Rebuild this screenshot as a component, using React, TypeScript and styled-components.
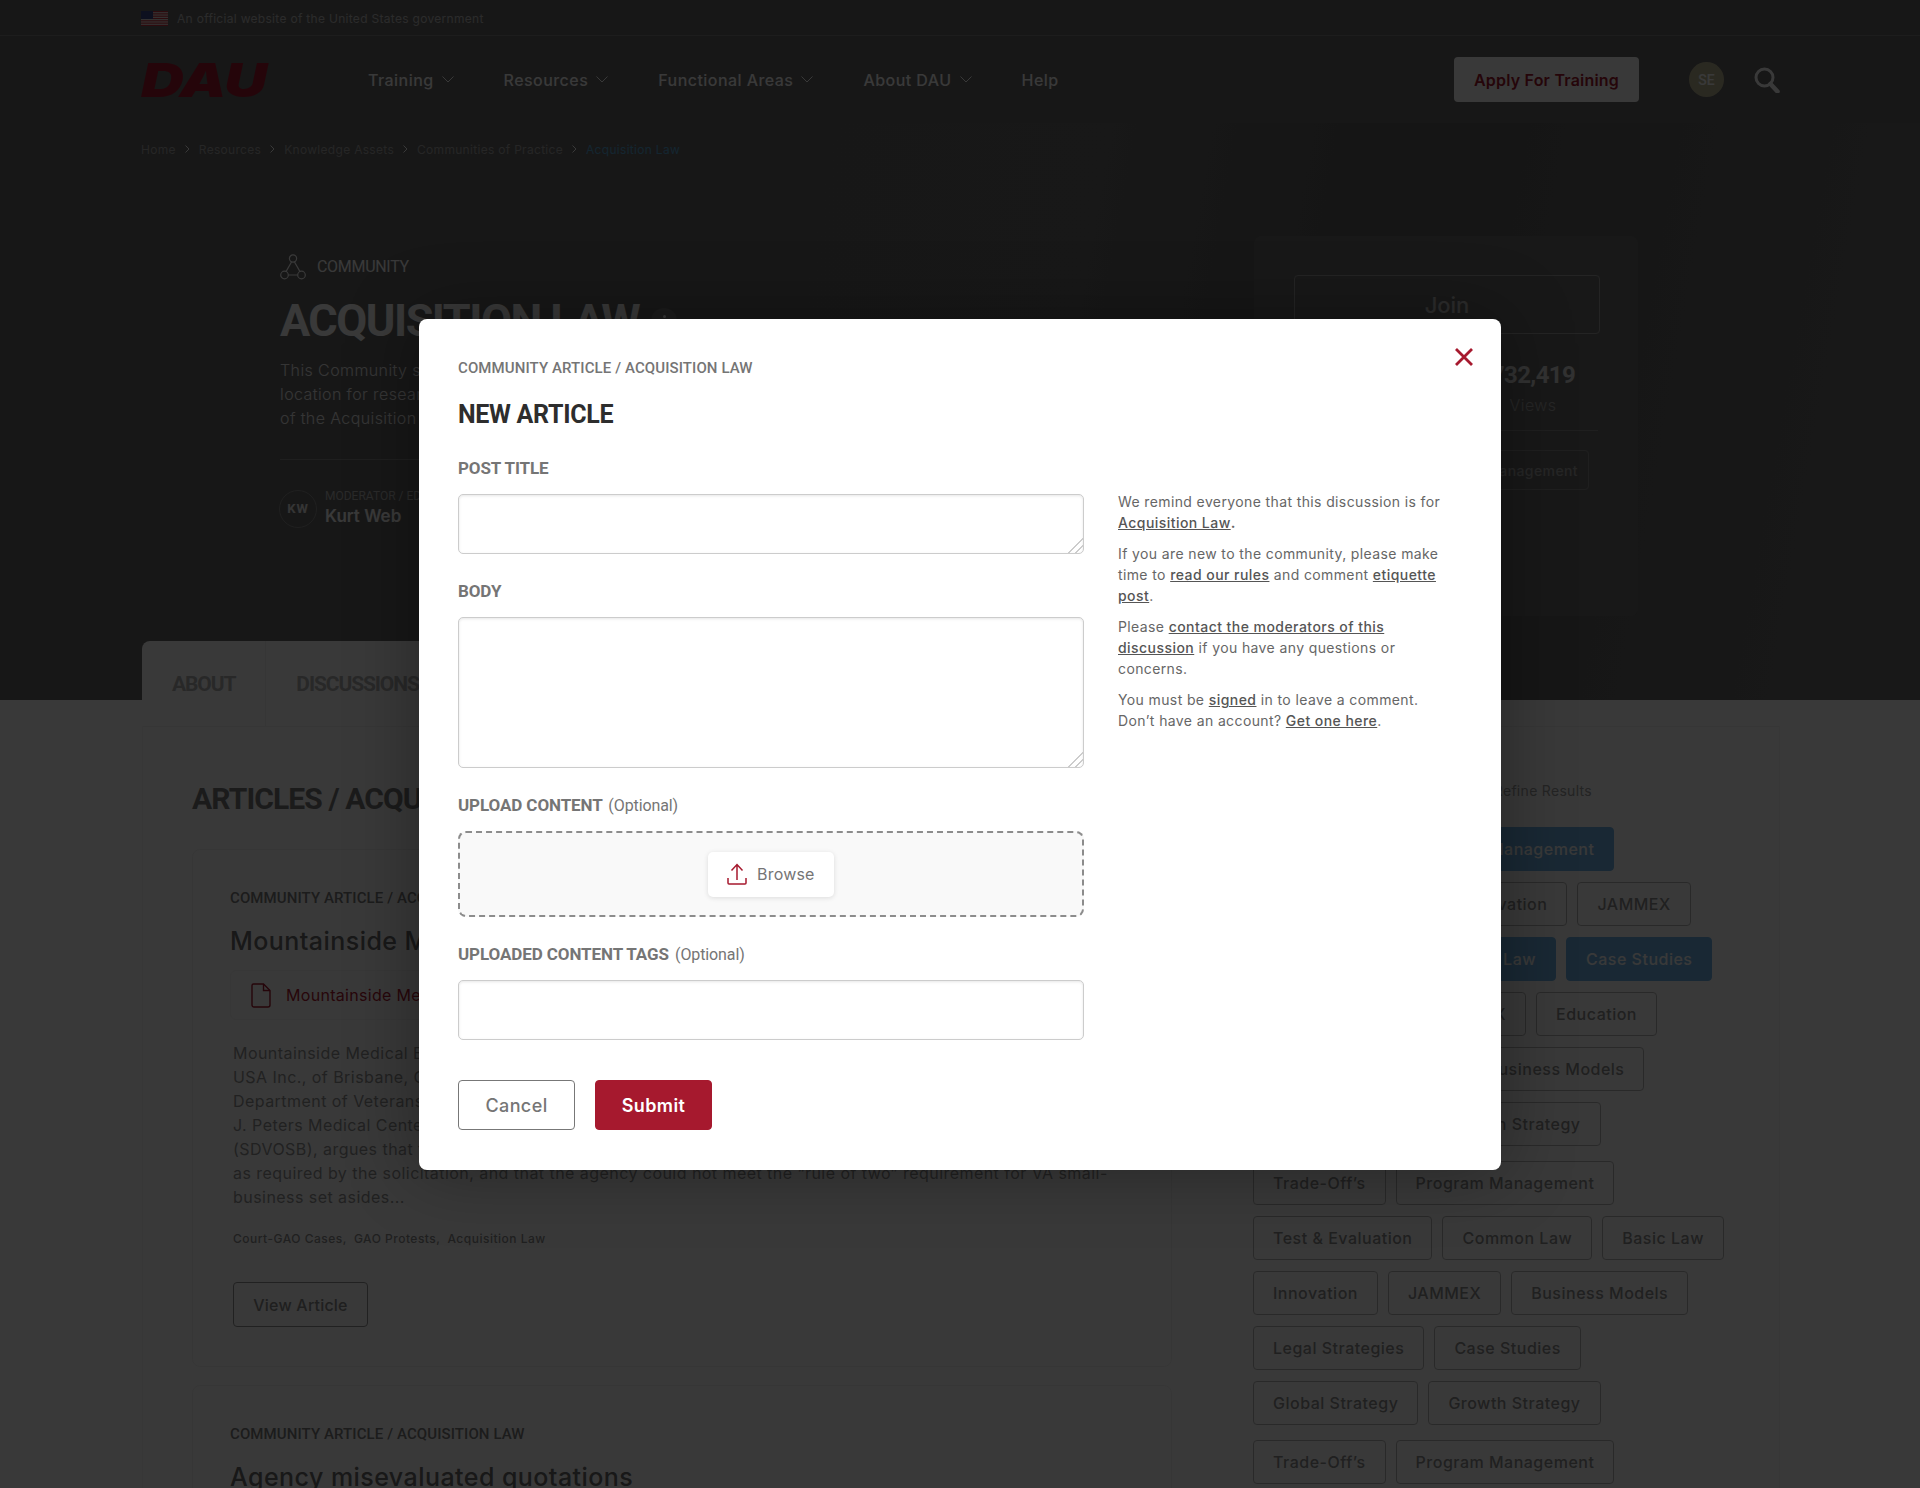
import styled, { createGlobalStyle } from "styled-components";

const SANS = `"Inter", "Noto Sans", sans-serif`;
const HEAD = `"Roboto", "Liberation Sans", sans-serif`;
const CRIMSON = "#a6192e";

const GlobalStyle = createGlobalStyle`
  html, body {
    margin: 0;
    padding: 0;
    background: #fff;
  }
  body {
    height: 1488px;
    overflow: hidden;
    font-family: ${SANS};
  }
  * {
    box-sizing: border-box;
  }
`;

const Chevron = () => (
  <svg width="12" height="7" viewBox="0 0 12 7" fill="none" stroke="#fff" strokeWidth="1">
    <path d="M0.5 0.5 L6 6 L11.5 0.5" />
  </svg>
);

const Crumbs = ["Home", "Resources", "Knowledge Assets", "Communities of Practice"];

const NavItems = [
  { label: "Training", menu: true },
  { label: "Resources", menu: true },
  { label: "Functional Areas", menu: true },
  { label: "About DAU", menu: true },
  { label: "Help", menu: false },
];

const articleLines = [
  "Mountainside Medical Equipment Inc., of Rye Brook, New York, protests the award to Bio-Medical",
  "USA Inc., of Brisbane, California, of a contract issued by the Department of Veterans Affairs for",
  "Department of Veterans Affairs medical supplies at the James",
  "J. Peters Medical Center. The protester, a service-disabled veteran-owned small business",
  "(SDVOSB), argues that the awardee's quotation was not evaluated on the basis of the factors",
  "as required by the solicitation, and that the agency could not meet the “rule of two” requirement for VA small-",
  "business set asides...",
];

const filterRows: { label: string; active?: boolean }[][] = [
  [{ label: "Trade-Off’s", active: true }, { label: "Program Management", active: true }],
  [{ label: "Test & Evaluation" }, { label: "Innovation" }, { label: "JAMMEX" }],
  [{ label: "Legal Strategies", active: true }, { label: "Basic Law", active: true }, { label: "Case Studies", active: true }],
  [{ label: "Common Law" }, { label: "JAMMEX" }, { label: "Education" }],
  [{ label: "Acquisition Strategy" }, { label: "Business Models" }],
  [{ label: "Global Strategy" }, { label: "Growth Strategy" }],
];

const moreRows: { label: string }[][] = [
  [{ label: "Trade-Off’s" }, { label: "Program Management" }],
  [{ label: "Test & Evaluation" }, { label: "Common Law" }, { label: "Basic Law" }],
  [{ label: "Innovation" }, { label: "JAMMEX" }, { label: "Business Models" }],
  [{ label: "Legal Strategies" }, { label: "Case Studies" }],
  [{ label: "Global Strategy" }, { label: "Growth Strategy" }],
];

const App = () => {
  return (
    <Page>
      <GlobalStyle />
      <TopBar>
        <svg width="27" height="15" viewBox="0 0 27 15">
          <rect width="27" height="15" fill="#e8e8e8" />
          {[0, 2, 4, 6, 8, 10, 12].map((row) => (
            <rect key={row} y={row * 1.154} width="27" height="1.154" fill="#c8313e" />
          ))}
          <rect width="12" height="8" fill="#3c4a8c" />
        </svg>
        <OfficialText>An official website of the United States government</OfficialText>
      </TopBar>

      <MainHeader>
        <Logo>DAU</Logo>
        <Nav>
          {NavItems.map((item) => (
            <NavItem key={item.label}>
              {item.label}
              {item.menu && <Chevron />}
            </NavItem>
          ))}
        </Nav>
        <ApplyButton>Apply For Training</ApplyButton>
        <Avatar>SE</Avatar>
        <SearchIcon width="26" height="26" viewBox="0 0 26 26" fill="none" stroke="#fff" strokeWidth="3">
          <circle cx="10.5" cy="10.5" r="8.5" />
          <path d="M16.5 17 L23.5 24.5" strokeWidth="4.5" strokeLinecap="round" />
        </SearchIcon>
      </MainHeader>

      <Hero>
        <Breadcrumb>
          {Crumbs.map((crumb) => (
            <Crumb key={crumb}>
              {crumb}
              <svg width="5" height="8" viewBox="0 0 5 8" fill="none" stroke="#fff" strokeWidth="1">
                <path d="M0.5 0.5 L4 4 L0.5 7.5" />
              </svg>
            </Crumb>
          ))}
          <CurrentCrumb>Acquisition Law</CurrentCrumb>
        </Breadcrumb>

        <HeroBody>
          <HeroLeft>
            <CommunityRow>
              <svg width="26" height="26" viewBox="0 0 26 26" fill="none" stroke="#fff" strokeWidth="1.2">
                <circle cx="13" cy="4.5" r="3.6" />
                <circle cx="4.5" cy="21" r="3.8" />
                <circle cx="21.5" cy="21" r="3.8" />
                <path d="M11.5 8 L6 17.6 M14.5 8 L20 17.6 M8.4 21 H17.6" />
              </svg>
              Community
            </CommunityRow>
            <TitleRow>
              <HeroTitle>Acquisition Law</HeroTitle>
              <Kebab>
                <i />
                <i />
                <i />
              </Kebab>
            </TitleRow>
            <HeroText>
              This Community serves as a central
              <br />
              location for research and discussion
              <br />
              of the Acquisition Law functional area.
            </HeroText>
            <HeroDivider />
            <Author>
              <AuthorBadge>KW</AuthorBadge>
              <div>
                <AuthorRole>Moderator / Editor</AuthorRole>
                <AuthorName>Kurt Web</AuthorName>
              </div>
            </Author>
          </HeroLeft>

          <StatsCard>
            <JoinButton>Join</JoinButton>
            <Stats>
              <Stat>
                <StatValue>1,204</StatValue>
                <StatLabel>Members</StatLabel>
              </Stat>
              <Stat>
                <StatValue>732,419</StatValue>
                <StatLabel>Views</StatLabel>
              </Stat>
            </Stats>
            <StatsDivider />
            <CardTag>Program Management</CardTag>
          </StatsCard>
        </HeroBody>
      </Hero>

      <Content>
        <Tabs>
          <Tab>About</Tab>
          <Tab>Discussions</Tab>
          <Tab>Articles</Tab>
        </Tabs>
        <ContentCard>
          <ArticleColumn>
            <SectionTitle>Articles / Acquisition Law</SectionTitle>
            <ArticleCard>
              <Eyebrow>Community Article / Acquisition Law</Eyebrow>
              <ArticleTitle>Mountainside Medical Equipment</ArticleTitle>
              <Attachment>
                <svg width="20" height="25" viewBox="0 0 20 25" fill="none" stroke={CRIMSON} strokeWidth="1.4">
                  <path d="M2.5 1 H12.5 L19 7.5 V22 A2 2 0 0 1 17 24 H3 A2 2 0 0 1 1 22 V2.5 A1.5 1.5 0 0 1 2.5 1 Z" />
                  <path d="M12.5 1 V7.5 H19" />
                </svg>
                Mountainside Medical Equipment Inc.pdf
              </Attachment>
              <ArticleBody>
                {articleLines.map((line) => (
                  <BodyLine key={line}>{line}</BodyLine>
                ))}
              </ArticleBody>
              <ArticleTags>
                <span>Court-GAO Cases,</span>
                <span>GAO Protests,</span>
                <span>Acquisition Law</span>
              </ArticleTags>
              <ViewButton>View Article</ViewButton>
            </ArticleCard>
            <ArticleCard>
              <Eyebrow>Community Article / Acquisition Law</Eyebrow>
              <ArticleTitle>Agency misevaluated quotations</ArticleTitle>
            </ArticleCard>
          </ArticleColumn>

          <Sidebar>
            <RefineLabel>Select one or more topics to Refine Results</RefineLabel>
            <FilterGroup>
              {filterRows.map((row, index) => (
                <FilterRow key={index}>
                  {row.map((tag) => (
                    <FilterTag key={tag.label} $active={tag.active}>
                      {tag.label}
                    </FilterTag>
                  ))}
                </FilterRow>
              ))}
            </FilterGroup>
            <FilterGroup>
              {moreRows.map((row, index) => (
                <FilterRow key={index}>
                  {row.map((tag) => (
                    <FilterTag key={tag.label}>{tag.label}</FilterTag>
                  ))}
                </FilterRow>
              ))}
            </FilterGroup>
            <FilterGroup>
              <FilterRow>
                <FilterTag>Trade-Off’s</FilterTag>
                <FilterTag>Program Management</FilterTag>
              </FilterRow>
            </FilterGroup>
          </Sidebar>
        </ContentCard>
      </Content>

      <Overlay>
        <Modal>
          <CloseButton aria-label="Close">
            <svg width="18" height="18" viewBox="0 0 18 18" fill="none" stroke={CRIMSON} strokeWidth="2.8">
              <path d="M1 1 L17 17 M17 1 L1 17" />
            </svg>
          </CloseButton>
          <ModalEyebrow>Community Article / Acquisition Law</ModalEyebrow>
          <ModalTitle>New Article</ModalTitle>
          <ModalColumns>
            <FormColumn>
              <Field>
                <FieldLabel>Post Title</FieldLabel>
                <TextArea $height={60} />
              </Field>
              <Field>
                <FieldLabel>Body</FieldLabel>
                <TextArea $height={151} />
              </Field>
              <Field>
                <FieldLabel>
                  Upload Content <Optional>(Optional)</Optional>
                </FieldLabel>
                <DropZone>
                  <BrowseButton>
                    <svg width="20" height="22" viewBox="0 0 20 22" fill="none" stroke={CRIMSON} strokeWidth="1.5">
                      <path d="M10 17 V2 M4.5 7.5 L10 1.5 L15.5 7.5" />
                      <path d="M1 15 V20 A1 1 0 0 0 2 21 H18 A1 1 0 0 0 19 20 V15" />
                    </svg>
                    Browse
                  </BrowseButton>
                </DropZone>
              </Field>
              <Field>
                <FieldLabel>
                  Uploaded Content Tags <Optional>(Optional)</Optional>
                </FieldLabel>
                <TextInput />
              </Field>
              <Actions>
                <CancelButton>Cancel</CancelButton>
                <SubmitButton>Submit</SubmitButton>
              </Actions>
            </FormColumn>
            <Aside>
              <AsideText>
                We remind everyone that this discussion is for <AsideLink>Acquisition Law</AsideLink>
                <strong>.</strong>
              </AsideText>
              <AsideText>
                If you are new to the community, please make time to <AsideLink>read our rules</AsideLink> and comment{" "}
                <AsideLink>etiquette post</AsideLink>.
              </AsideText>
              <AsideText>
                Please <AsideLink>contact the moderators of this discussion</AsideLink> if you have any questions or
                concerns.
              </AsideText>
              <AsideText>
                You must be <AsideLink>signed</AsideLink> in to leave a comment. Don’t have an account?{" "}
                <AsideLink>Get one here</AsideLink>.
              </AsideText>
            </Aside>
          </ModalColumns>
        </Modal>
      </Overlay>
    </Page>
  );
};

export default App;

const Page = styled.div`
  position: relative;
  width: 1920px;
  height: 1488px;
  overflow: hidden;
  background: #fff;
`;

const TopBar = styled.div`
  display: flex;
  align-items: center;
  gap: 9px;
  height: 36px;
  padding: 1px 0 0 141px;
  background: #686868;
  border-bottom: 1px solid #808080;
`;

const OfficialText = styled.span`
  font-size: 12px;
  letter-spacing: 0.3px;
  color: #c0c0c0;
`;

const MainHeader = styled.header`
  display: flex;
  align-items: center;
  height: 87px;
  padding: 0 140px 0 141px;
  background: #666;
`;

const Logo = styled.div`
  width: 127px;
  font-family: ${SANS};
  font-size: 47px;
  font-weight: 900;
  font-style: italic;
  line-height: 1;
  letter-spacing: -1px;
  color: ${CRIMSON};
  transform: scaleX(1.26);
  transform-origin: left center;
`;

const Nav = styled.nav`
  display: flex;
  align-items: center;
  gap: 50px;
  margin-left: 100px;
`;

const NavItem = styled.a`
  display: flex;
  align-items: center;
  gap: 8px;
  font-size: 16px;
  font-weight: 500;
  letter-spacing: 0.45px;
  color: #fff;
`;

const ApplyButton = styled.button`
  width: 185px;
  height: 45px;
  margin-left: auto;
  border: 0;
  border-radius: 4px;
  background: #fff;
  font-family: ${SANS};
  font-size: 16px;
  font-weight: 600;
  letter-spacing: 0.2px;
  color: ${CRIMSON};
`;

const Avatar = styled.div`
  display: flex;
  align-items: center;
  justify-content: center;
  width: 35px;
  height: 35px;
  margin-left: 50px;
  border-radius: 50%;
  background: #bdb896;
  font-family: ${HEAD};
  font-size: 14px;
  font-weight: 500;
  color: #fff;
`;

const SearchIcon = styled.svg`
  margin-left: 30px;
`;

const Hero = styled.section`
  height: 577px;
  padding-top: 18px;
  background: linear-gradient(100deg, #666 0%, #6a6a6a 55%, #5e5e5e 70%, #6e6e6e 100%);
`;

const Breadcrumb = styled.div`
  display: flex;
  align-items: center;
  gap: 9px;
  height: 16px;
  margin-left: 141px;
  font-size: 12px;
  letter-spacing: 0.3px;
  color: #a8a8a8;
`;

const Crumb = styled.span`
  display: flex;
  align-items: center;
  gap: 9px;
`;

const CurrentCrumb = styled.span`
  color: #5aa8d8;
`;

const HeroBody = styled.div`
  display: flex;
  margin-top: 79px;
  padding: 0 282px 0 280px;
`;

const HeroLeft = styled.div`
  padding-top: 18px;
`;

const CommunityRow = styled.div`
  display: flex;
  align-items: center;
  gap: 11px;
  height: 25px;
  font-family: ${HEAD};
  font-size: 16px;
  font-weight: 400;
  letter-spacing: -0.3px;
  text-transform: uppercase;
  color: #fff;
`;

const TitleRow = styled.div`
  display: flex;
  align-items: center;
  gap: 12px;
  margin-top: 15px;
`;

const HeroTitle = styled.h1`
  margin: 0;
  font-family: ${HEAD};
  font-size: 45px;
  font-weight: 700;
  line-height: 54px;
  letter-spacing: -1.5px;
  text-transform: uppercase;
  color: #fff;
`;

const Kebab = styled.span`
  display: flex;
  flex-direction: column;
  align-items: center;
  justify-content: center;
  gap: 2px;
  width: 26px;
  height: 26px;
  border-radius: 50%;
  background: #7c7c7c;

  i {
    width: 3px;
    height: 3px;
    border-radius: 50%;
    background: #fff;
  }
`;

const HeroText = styled.p`
  margin: 10px 0 0;
  font-size: 16px;
  font-weight: 300;
  line-height: 24px;
  letter-spacing: 0.4px;
  color: #eee;
`;

const HeroDivider = styled.hr`
  width: 700px;
  height: 1px;
  margin: 29px 0 0;
  border: 0;
  background: #8c8c8c;
`;

const Author = styled.div`
  display: flex;
  align-items: center;
  gap: 8px;
  margin-top: 29px;
  margin-left: -1px;
`;

const AuthorBadge = styled.div`
  display: flex;
  align-items: center;
  justify-content: center;
  width: 38px;
  height: 38px;
  border: 1px solid #8c8c8c;
  border-radius: 50%;
  font-family: ${HEAD};
  font-size: 13px;
  font-weight: 700;
  letter-spacing: 1px;
  color: #eee;
`;

const AuthorRole = styled.div`
  font-family: ${HEAD};
  font-size: 12px;
  line-height: 14px;
  text-transform: uppercase;
  color: #bbb;
`;

const AuthorName = styled.div`
  padding-top: 1px;
  font-size: 17px;
  font-weight: 600;
  line-height: 24px;
  color: #fff;
`;

const StatsCard = styled.aside`
  width: 384px;
  height: 380px;
  margin-left: auto;
  padding: 39px 40px;
  border-radius: 8px;
  background: #6e6e6e;
`;

const JoinButton = styled.button`
  width: 306px;
  height: 59px;
  border: 1px solid #a0a0a0;
  border-radius: 4px;
  background: transparent;
  font-family: ${SANS};
  font-size: 22px;
  font-weight: 500;
  color: #c4c4c4;
`;

const Stats = styled.div`
  display: grid;
  grid-template-columns: 172px 134px;
  margin-top: 27px;
  text-align: center;
`;

const Stat = styled.div``;

const StatValue = styled.div`
  font-family: ${HEAD};
  font-size: 24px;
  font-weight: 700;
  line-height: 28px;
  letter-spacing: -0.6px;
  color: #ddd;
`;

const StatLabel = styled.div`
  margin-top: 5px;
  font-size: 16px;
  font-weight: 300;
  line-height: 22px;
  letter-spacing: 0.4px;
  color: #aaa;
`;

const StatsDivider = styled.hr`
  height: 1px;
  margin: 14px 0 19px;
  border: 0;
  background: #8c8c8c;
`;

const CardTag = styled.div`
  display: flex;
  align-items: center;
  justify-content: flex-end;
  width: 295px;
  height: 40px;
  padding: 0 10px;
  border: 1px solid #8c8c8c;
  border-radius: 4px;
  font-size: 14px;
  font-weight: 500;
  letter-spacing: 0.4px;
  color: #aaa;
`;

const Content = styled.main`
  width: 1638px;
  margin: -59px 0 0 142px;
`;

const Tabs = styled.div`
  display: flex;
  width: 620px;
  height: 85px;
  border-radius: 8px 8px 0 0;
  background: #fff;
`;

const Tab = styled.div`
  display: flex;
  align-items: center;
  padding: 0 30px;
  border-right: 1px solid #f0f0f0;
  font-family: ${HEAD};
  font-size: 21px;
  font-weight: 700;
  letter-spacing: -1.1px;
  text-transform: uppercase;
  color: #b4b4b4;
`;

const ContentCard = styled.div`
  display: flex;
  padding: 52px 0 0 49px;
  border-top: 1px solid #f2f2f2;
  border-left: 1px solid #f4f4f4;
  border-right: 1px solid #f4f4f4;
  background: #fff;
`;

const ArticleColumn = styled.div`
  width: 980px;
`;

const SectionTitle = styled.h2`
  height: 40px;
  margin: 0 0 30px;
  font-family: ${HEAD};
  font-size: 30px;
  font-weight: 700;
  line-height: 40px;
  letter-spacing: -0.9px;
  text-transform: uppercase;
  white-space: nowrap;
  color: #7a7a7a;
`;

const ArticleCard = styled.article`
  padding: 38px 37px 39px;
  margin-bottom: 18px;
  border: 1px solid #f2f2f2;
  border-radius: 8px;
`;

const Eyebrow = styled.div`
  font-family: ${HEAD};
  font-size: 15px;
  font-weight: 500;
  line-height: 20px;
  letter-spacing: 0.1px;
  text-transform: uppercase;
  color: #7c7c7c;
`;

const ArticleTitle = styled.h3`
  margin: 15px 0 0;
  font-size: 25px;
  font-weight: 500;
  line-height: 36px;
  letter-spacing: 0.45px;
  white-space: nowrap;
  color: #6c6c6c;
`;

const Attachment = styled.div`
  display: flex;
  align-items: center;
  gap: 15px;
  width: 900px;
  height: 50px;
  margin-top: 11px;
  padding-left: 20px;
  border: 1px solid #f4f4f4;
  border-radius: 6px;
  font-size: 16px;
  font-weight: 400;
  letter-spacing: 0.3px;
  color: #b01c33;
`;

const ArticleBody = styled.div`
  margin: 21px 0 0 3px;
  font-size: 16px;
  font-weight: 400;
  line-height: 24px;
  color: #959595;
`;

const BodyLine = styled.span`
  display: block;
  white-space: nowrap;
  letter-spacing: 0.45px;
`;

const ArticleTags = styled.div`
  display: flex;
  gap: 7px;
  margin: 22px 0 0 3px;
  font-size: 12px;
  font-weight: 500;
  line-height: 16px;
  letter-spacing: 0.5px;
  color: #909090;
`;

const ViewButton = styled.button`
  display: block;
  width: 135px;
  height: 45px;
  margin: 35px 0 0 3px;
  border: 1px solid #949494;
  border-radius: 4px;
  background: transparent;
  font-family: ${SANS};
  font-size: 16px;
  font-weight: 500;
  letter-spacing: 0.2px;
  color: #8c8c8c;
`;

const Sidebar = styled.aside`
  margin-left: 81px;
`;

const RefineLabel = styled.div`
  width: 339px;
  height: 24px;
  margin-bottom: 24px;
  font-size: 14px;
  line-height: 24px;
  text-align: right;
  white-space: nowrap;
  letter-spacing: 0.3px;
  color: #a0a0a0;
`;

const FilterGroup = styled.div`
  display: flex;
  flex-direction: column;
  gap: 11px;
  margin-bottom: 15px;
`;

const FilterRow = styled.div`
  display: flex;
  gap: 10px;
`;

const FilterTag = styled.span<{ $active?: boolean }>`
  display: flex;
  align-items: center;
  height: 44px;
  padding: 0 19px;
  border: 1px solid ${({ $active }) => ($active ? "#6fb4e6" : "#b8b8b8")};
  border-radius: 4px;
  background: ${({ $active }) => ($active ? "#6fb4e6" : "transparent")};
  font-size: 16px;
  font-weight: 500;
  white-space: nowrap;
  letter-spacing: 0.5px;
  color: ${({ $active }) => ($active ? "#fff" : "#909090")};
`;

const Overlay = styled.div`
  position: absolute;
  inset: 0;
  display: flex;
  justify-content: center;
  padding-top: 319px;
  background: rgba(0, 0, 0, 0.775);
`;

const Modal = styled.div`
  position: relative;
  width: 1082px;
  height: 851px;
  padding: 39px;
  border-radius: 8px;
  background: #fff;
  box-shadow: 0 0 70px rgba(0, 0, 0, 0.35);
`;

const CloseButton = styled.button`
  position: absolute;
  top: 29px;
  right: 28px;
  display: flex;
  padding: 0;
  border: 0;
  background: transparent;
`;

const ModalEyebrow = styled.div`
  font-family: ${HEAD};
  font-size: 15px;
  font-weight: 500;
  line-height: 20px;
  letter-spacing: 0.1px;
  text-transform: uppercase;
  color: #757575;
`;

const ModalTitle = styled.h2`
  margin: 21px 0 0;
  font-family: ${HEAD};
  font-size: 25px;
  font-weight: 700;
  line-height: 32px;
  letter-spacing: -0.3px;
  text-transform: uppercase;
  color: #2d2d2d;
`;

const ModalColumns = styled.div`
  display: flex;
  gap: 34px;
  margin-top: 25px;
`;

const FormColumn = styled.div`
  width: 626px;
`;

const Field = styled.div`
  margin-bottom: 25px;
`;

const FieldLabel = styled.div`
  height: 24px;
  margin-bottom: 14px;
  font-family: ${HEAD};
  font-size: 17px;
  font-weight: 700;
  line-height: 24px;
  letter-spacing: -0.1px;
  text-transform: uppercase;
  color: #757575;
`;

const Optional = styled.span`
  margin-left: 2px;
  font-size: 16px;
  font-weight: 400;
  text-transform: none;
`;

const TextArea = styled.textarea<{ $height: number }>`
  display: block;
  width: 100%;
  height: ${({ $height }) => $height}px;
  border: 1px solid #ccc;
  border-radius: 5px;
  box-shadow: inset 0 1px 3px rgba(0, 0, 0, 0.1);
  background: #fff;
  resize: vertical;

  &::-webkit-resizer {
    background: linear-gradient(
      135deg,
      transparent 48%,
      #ccc 48%,
      #ccc 55%,
      transparent 55%,
      transparent 72%,
      #ccc 72%,
      #ccc 79%,
      transparent 79%
    );
  }
`;

const TextInput = styled.input`
  display: block;
  width: 100%;
  height: 60px;
  border: 1px solid #ccc;
  border-radius: 5px;
  box-shadow: inset 0 1px 3px rgba(0, 0, 0, 0.1);
  background: #fff;
`;

const DropZone = styled.div`
  display: flex;
  align-items: center;
  justify-content: center;
  height: 86px;
  border: 2px dashed #8c8c8c;
  border-radius: 8px;
  background: #f9f9f9;
`;

const BrowseButton = styled.button`
  display: flex;
  align-items: center;
  gap: 10px;
  width: 126px;
  height: 45px;
  padding: 0 0 0 19px;
  border: 0;
  border-radius: 5px;
  background: #fff;
  box-shadow: 0 1px 5px rgba(0, 0, 0, 0.12);
  font-family: ${SANS};
  font-size: 16px;
  letter-spacing: 0.2px;
  color: #757575;
`;

const Actions = styled.div`
  display: flex;
  gap: 20px;
  margin-top: 40px;
`;

const CancelButton = styled.button`
  width: 117px;
  height: 50px;
  border: 1px solid #777;
  border-radius: 4px;
  background: #fff;
  font-family: ${SANS};
  font-size: 18px;
  font-weight: 500;
  letter-spacing: 0.4px;
  color: #757575;
`;

const SubmitButton = styled(CancelButton)`
  border-color: ${CRIMSON};
  background: ${CRIMSON};
  font-weight: 600;
  color: #fff;
`;

const Aside = styled.div`
  width: 332px;
  padding-top: 35px;
`;

const AsideText = styled.p`
  margin: 0 0 10px;
  font-size: 14px;
  line-height: 21px;
  letter-spacing: 0.38px;
  color: #666;
`;

const AsideLink = styled.a`
  font-weight: 500;
  letter-spacing: 0.45px;
  text-decoration: underline;
  color: #555;
`;
